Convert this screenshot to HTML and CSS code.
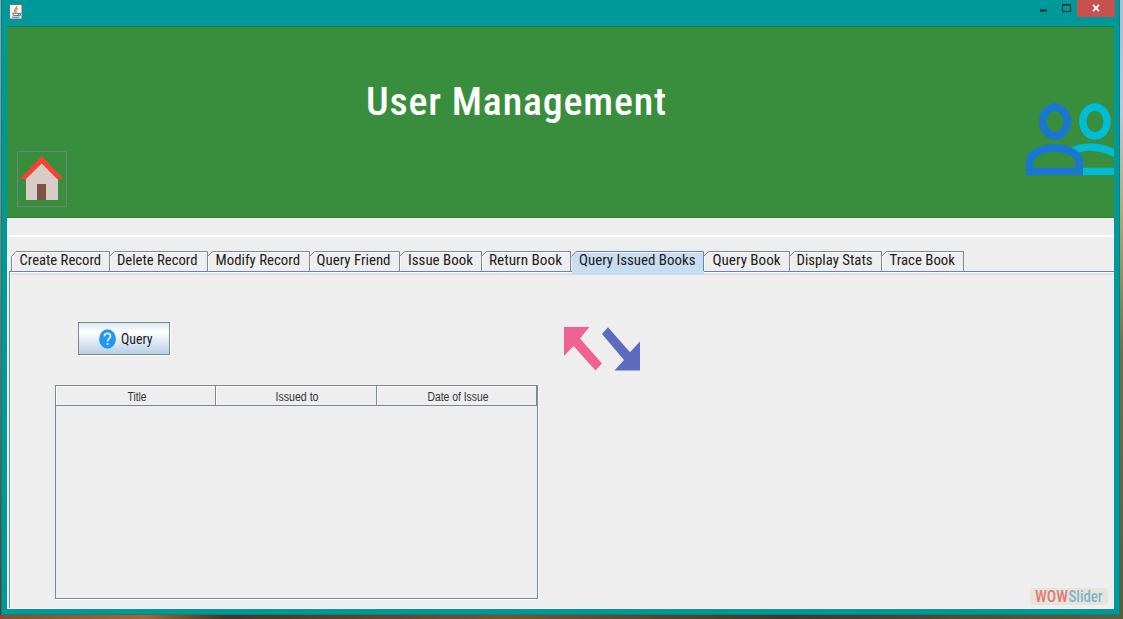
FILE: index.html
```html
<!DOCTYPE html>
<html lang="en">
<head>
<meta charset="utf-8">
<title>User Management</title>
<link rel="stylesheet" href="styles.css">
</head>
<body>
<div class="window">
  <div class="titlebar">
    <svg class="java" width="14" height="16" viewBox="0 0 14 16"><rect x=".5" y=".5" width="12.5" height="14.5" rx="1" fill="#f4f5f5" stroke="#56787e"/><path d="M7.700 2C9 4 3.500 5 6.300 8.600M8.800 4.400C5.500 5.800 7.600 6.800 6.800 8.600" fill="none" stroke="#e88a3c" stroke-width="1.200"/><path d="M3.500 9.300h6v2.200h-5zM9.500 9.500h2v1.800H9M3 13.200h7.500" fill="none" stroke="#55758b"/></svg>
    <div class="controls">
      <svg class="ctl-icons" width="32" height="18"><path d="M0 10.500h7" stroke="#27292a" stroke-width="2"/><path d="M22.500 4.500h8v7h-8zM22 5h9" fill="none" stroke="#27292a"/></svg>
      <div class="close"><svg width="8" height="8" viewBox="0 0 8 8"><path d="M1 .8l6 6.400M7 .8l-6 6.400" stroke="#fff" stroke-width="1.700"/></svg></div>
    </div>
  </div>
  <div class="client">
    <header class="header">
      <div class="home"><svg width="48" height="54" viewBox="0 0 48 54"><path d="M8 24L24 8 40 24v24H8z" fill="#d7ccc8"/><path d="M19 32h9v16h-9z" fill="#795548"/><path d="M23.700 4L45.500 27H39L23.700 11.500 8 27H1.500z" fill="#f44336"/></svg></div>
      <svg class="title" width="320" height="60"><text x="8" y="49" textLength="301" lengthAdjust="spacingAndGlyphs">User Management</text></svg>
      <svg class="people" width="90" height="76" viewBox="0 0 90 76"><g fill="none" stroke-width="7.400"><g stroke="#00bcd4"><ellipse cx="70" cy="18.500" rx="12.200" ry="14.500"/><path d="M46 49C58 42 78 42 94 53M55 68.400h36"/></g><g><path d="M4.700 68.400h49.600V57C48 41 11 41 4.700 57z" fill="#388e3c" stroke="#1976d2"/><ellipse cx="30" cy="18.500" rx="12.200" ry="14.500" stroke="#1976d2"/></g></g></svg>
    </header>
    <div class="toolbar"></div>
    <nav class="tabs">
      <svg width="954" height="24"><path class="tab-shine" d="M2.500 20V6L6.500 1.500H99M100.500 20V6L104.500 1.500H197M198.500 20V6L202.500 1.500H299M300.500 20V6L304.500 1.500H389M390.500 20V6L394.500 1.500H471M472.500 20V6L476.500 1.500H560M694.500 20V6L698.500 1.500H779M780.500 20V6L784.500 1.500H871M872.500 20V6L876.500 1.500H953"/><path class="tab-lines" d="M1.500 20V5.500L6 .500H99.500V20M99.500 5.500L104.500.500H197.500V20M197.500 5.500L202.500.500H299.500V20M299.500 5.500L304.500.500H389.500V20M389.500 5.500L394.500.500H471.500V20M471.500 5.500L476.500.500H560.500V20M693.500 5.500L698.500.500H779.500V20M779.500 5.500L784.500.500H871.500V20M871.500 5.500L876.500.500H954M953.500.500V20"/><path class="active" d="M562 24V5.500L566 .500H693V20h1v4z"/><path class="active-line" d="M561.500 5.500L566 .500H693.500V20"/><path class="active-shine" d="M566 1.500H693"/>
      <g class="labels">
        <text x="9.500" y="14.400" textLength="81.500" lengthAdjust="spacingAndGlyphs">Create Record</text>
        <text x="107" y="14.400" textLength="80.500" lengthAdjust="spacingAndGlyphs">Delete Record</text>
        <text x="205.500" y="14.400" textLength="84.500" lengthAdjust="spacingAndGlyphs">Modify Record</text>
        <text x="306.500" y="14.400" textLength="74" lengthAdjust="spacingAndGlyphs">Query Friend</text>
        <text x="398" y="14.400" textLength="65" lengthAdjust="spacingAndGlyphs">Issue Book</text>
        <text x="479" y="14.400" textLength="73" lengthAdjust="spacingAndGlyphs">Return Book</text>
        <text x="569" y="14.400" textLength="116.500" lengthAdjust="spacingAndGlyphs">Query Issued Books</text>
        <text x="702.500" y="14.400" textLength="68" lengthAdjust="spacingAndGlyphs">Query Book</text>
        <text x="786.500" y="14.400" textLength="76" lengthAdjust="spacingAndGlyphs">Display Stats</text>
        <text x="879.500" y="14.400" textLength="65.500" lengthAdjust="spacingAndGlyphs">Trace Book</text>
      </g></svg>
    </nav>
    <main class="panel">
      <div class="left">
        <button class="query"><svg width="17" height="20" viewBox="0 0 17 20"><ellipse cx="8.500" cy="10" rx="8.400" ry="9.700" fill="#2196f3"/><path d="M5.400 7.500C5.400 3.200 11.500 3.400 11.500 7.200C11.500 9.500 8.500 9.500 8.500 12.500M8.500 14v2" fill="none" stroke="#e8eef3" stroke-width="1.800"/></svg><svg class="labels" width="34" height="20"><text x="1" y="15" textLength="31.500" lengthAdjust="spacingAndGlyphs">Query</text></svg></button>
        <div class="table">
          <div class="thead"><div><svg width="80" height="18"><text x="41" y="14" textLength="19" lengthAdjust="spacingAndGlyphs">Title</text></svg></div><div><svg width="80" height="18"><text x="41" y="14" textLength="43" lengthAdjust="spacingAndGlyphs">Issued to</text></svg></div><div><svg width="80" height="18"><text x="41" y="14" textLength="61" lengthAdjust="spacingAndGlyphs">Date of Issue</text></svg></div></div>
        </div>
      </div>
      <svg class="arrows" width="78" height="46" viewBox="0 0 78 46"><path d="M1 1h25.500l-9.500 11.500 22 25L32.500 44.500 10.500 20 1 30z" fill="#f06292"/><path d="M39 8L45 1.200l22 25L77 15.500V44.500H51.500L61 34z" fill="#5c6bc0"/></svg>
    </main>
    <div class="watermark"><svg width="78" height="17"><text x="5" y="14" textLength="33" lengthAdjust="spacingAndGlyphs" class="wow">WOW</text><text x="38.500" y="14" textLength="34" lengthAdjust="spacingAndGlyphs" class="slider">Slider</text></svg></div>
  </div>
</div>
</body>
</html>
```
FILE: styles.css
```css
* { box-sizing: border-box; }
body { margin: 0; width: 1123px; height: 619px; overflow: hidden; padding: 0 3px 4px 1px; background: linear-gradient(#a8bed7 0, #b7c7dc 110px, #b5a87a 210px, #6f7048 350px, #575d39 100%) right / 3px 100% no-repeat, linear-gradient(90deg, #80502f, #a9652e 13%, #463524 20%, #765330 45%, #3d3a28 70%, #59613d) bottom / 100% 4px no-repeat, linear-gradient(#8fa6b2, #858276 40%, #5b3520); }
svg { display: block; flex: none; }
.window { height: 615px; background: #009999; border: solid #008587; border-width: 0 1px 1px; padding: 0 5px 6px; display: flex; flex-direction: column; }
.titlebar { height: 26px; flex: none; display: flex; justify-content: space-between; }
.java { margin: 4px 0 0 2px; }
.controls { display: flex; }
.ctl-icons { margin-right: 5px; }
.close { width: 38px; height: 17px; background: #c75050; display: flex; align-items: center; justify-content: center; margin-right: -1px; padding-bottom: 1px; }
.client { position: relative; flex: 1; background: #eee; border-bottom: 1px solid #fff; padding-left: 1px; }
.header { height: 192px; background: #388e3c; border-top: 1px solid #21794f; border-bottom: 1px solid #2a7d2d; display: flex; margin-left: -1px; overflow: hidden; }
.home { width: 50px; height: 56px; border: 1px solid #6b8587; margin: 124px 291px 0 10px; flex: none; }
.title { margin-top: 39px; }
.people { margin: 76px 0 0 347px; }
text { font-family: "Roboto Condensed", Roboto, sans-serif; font-stretch: 75%; }
.title text { font-size: 38.5px; font-weight: 500; letter-spacing: .8px; fill: #fff; }
.toolbar { height: 33px; background: linear-gradient(#fff, #fff) 0 17px / 100% 2px no-repeat; }
.tabs { height: 23px; padding-left: 2px; position: relative; z-index: 1; }
.tab-lines { fill: none; stroke: #7a8a99; }
.tab-shine { fill: none; stroke: #fafafa; }
.active { fill: #c8ddf2; }
.active-line { fill: none; stroke: #6382bf; }
.active-shine { fill: none; stroke: #eff5fb; }
.labels text { font-size: 14.8px; fill: #202020; font-weight: 400; }
.panel { height: 337px; margin: -3px 0 0 1px; border: solid #6382bf; border-width: 1px 0 0 1px; box-shadow: inset 1px 1px #fff, inset 0 3px #d3e3f3; display: flex; }
.left { width: 482px; margin: 50px 0 0 45px; }
.query { width: 92px; height: 33px; margin: 0 0 30px 23px; padding: 0 0 0 20px; border: 1px solid #7a8a99; box-shadow: 1px 1px #fff; background: linear-gradient(#dce8f3, #fff 30%, #e7eff7 52%, #b8cfe5); display: flex; gap: 4px; align-items: center; }
.table { width: 483px; height: 214px; border: 1px solid #7a8a99; box-shadow: 1px 1px #fff; }
.thead { display: grid; grid-template-columns: 160px 161px 160px; height: 20px; }
.thead > div { border-right: 1px solid #7a8a99; border-bottom: 1px solid #7a8a99; box-shadow: inset 1px 1px #fff; display: flex; justify-content: center; }
.thead svg { margin-top: 1px; }
.thead text { font-size: 12px; text-anchor: middle; font-family: "Liberation Sans", sans-serif; fill: #303038; }
.arrows { margin: 54px 0 0 26px; }
.watermark { position: absolute; right: 6px; bottom: 3px; background: #e9e4d9; border-radius: 4px; }
.watermark text { font-size: 16px; font-weight: 500; }
.watermark .wow { fill: #dc7d78; }
.watermark .slider { fill: #79b7cc; }
```
